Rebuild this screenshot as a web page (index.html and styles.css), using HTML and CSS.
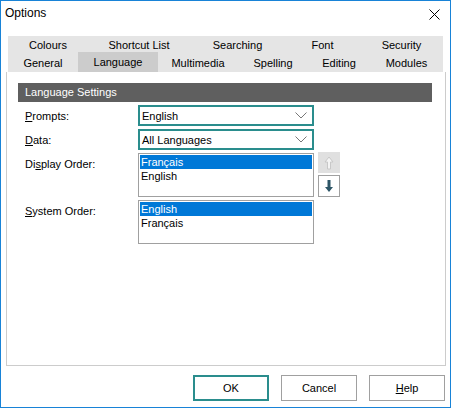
FILE: index.html
```html
<!DOCTYPE html>
<html lang="en">
<head>
  <meta charset="UTF-8">
  <title>Options</title>
  <link rel="stylesheet" href="styles.css">
</head>
<body>

<div class="window">
  <div class="titlebar">
    <span class="title">Options</span>
    <svg class="close" width="11" height="11" viewBox="0 0 11 11">
      <path d="M0.5 0.5 L10.5 10.5 M10.5 0.5 L0.5 10.5" stroke="#000" stroke-width="1" fill="none"/>
    </svg>
  </div>

  <div class="tabs">
    <div class="tab-row">
      <div class="tab" style="width:80px">Colours</div>
      <div class="tab" style="width:102px">Shortcut List</div>
      <div class="tab" style="width:95px">Searching</div>
      <div class="tab" style="width:75px">Font</div>
      <div class="tab" style="width:83px">Security</div>
    </div>
    <div class="tab-row">
      <div class="tab" style="width:70px">General</div>
      <div class="tab active" style="width:80px">Language</div>
      <div class="tab" style="width:80px">Multimedia</div>
      <div class="tab" style="width:70px">Spelling</div>
      <div class="tab" style="width:62px">Editing</div>
      <div class="tab" style="width:73px">Modules</div>
    </div>
  </div>

  <div class="panel">
    <div class="group-header">Language Settings</div>

    <div class="form">
      <label class="label"><u>P</u>rompts:</label>
      <div class="combo">
        <span>English</span>
        <svg width="12" height="7" viewBox="0 0 12 7"><path d="M0.5 0.5 L6 6 L11.5 0.5" stroke="#777" fill="none"/></svg>
      </div>

      <label class="label"><u>D</u>ata:</label>
      <div class="combo">
        <span>All Languages</span>
        <svg width="12" height="7" viewBox="0 0 12 7"><path d="M0.5 0.5 L6 6 L11.5 0.5" stroke="#777" fill="none"/></svg>
      </div>

      <label class="label label-top">Di<u>s</u>play Order:</label>
      <div class="list-wrap">
        <div class="listbox">
          <div class="item selected">Français</div>
          <div class="item">English</div>
        </div>
        <div class="move-btns">
          <div class="move-btn disabled">
            <svg width="10" height="14" viewBox="0 0 10 14"><path d="M5 1 L9 6 L6.5 6 L6.5 13 L3.5 13 L3.5 6 L1 6 Z" fill="#f4f4f4" stroke="#c8c8c8"/></svg>
          </div>
          <div class="move-btn">
            <svg width="10" height="14" viewBox="0 0 10 14"><path d="M3.5 1 L6.5 1 L6.5 8 L9 8 L5 13 L1 8 L3.5 8 Z" fill="#2d5566"/></svg>
          </div>
        </div>
      </div>

      <label class="label label-top"><u>S</u>ystem Order:</label>
      <div class="listbox">
        <div class="item selected">English</div>
        <div class="item">Français</div>
      </div>
    </div>
  </div>

  <div class="buttons">
    <button class="default">OK</button>
    <button>Cancel</button>
    <button><u>H</u>elp</button>
  </div>
</div>

</body>
</html>
```

FILE: styles.css
```css
body {
  margin: 0;
  font-family: "Liberation Sans", Arial, sans-serif;
  font-size: 11px;
  color: #000;
  background-color: #fff;
}
.window {
  box-sizing: border-box;
  width: 451px;
  height: 408px;
  border: 1px solid #1883d7;
  background-color: #fff;
  display: flex;
  flex-direction: column;
}
.titlebar {
  height: 35px;
  display: flex;
  justify-content: space-between;
  padding: 5px 10px 0 4px;
  box-sizing: border-box;
}
.title {
  font-size: 12px;
  line-height: 14px;
}
.close {
  margin-top: 3px;
}
.tabs {
  margin-left: 7px;
  width: 435px;
  background-color: #e5e5e5;
}
.tab-row {
  display: flex;
  height: 18px;
}
.tab {
  text-align: center;
  line-height: 18px;
  box-sizing: border-box;
}
.tab.active {
  background-color: #cccccc;
  margin-top: -2px;
  height: 20px;
  padding-top: 1px;
}
.panel {
  margin-left: 5px;
  width: 440px;
  height: 294px;
  box-sizing: border-box;
  border: 1px solid #cccccc;
  border-top: none;
  padding: 11px 13px 0 11px;
}
.group-header {
  background-color: #5f5f5f;
  color: #fff;
  height: 19px;
  line-height: 19px;
  padding-left: 7px;
}
.form {
  display: grid;
  grid-template-columns: 113px auto;
  row-gap: 3px;
  padding-left: 7px;
  margin-top: 3px;
}
.label {
  align-self: center;
}
.label-top {
  align-self: start;
  padding-top: 5px;
}
u {
  text-decoration: underline;
  text-underline-offset: 1px;
}
.combo {
  box-sizing: border-box;
  width: 176px;
  height: 21px;
  border: 2px solid #2a8d8d;
  display: flex;
  align-items: center;
  justify-content: space-between;
  padding: 0 5px 0 2px;
}
.list-wrap {
  display: flex;
  gap: 4px;
}
.listbox {
  box-sizing: border-box;
  width: 176px;
  height: 44px;
  border: 1px solid #a0a0a0;
  padding: 1px;
}
.item {
  height: 13px;
  line-height: 14px;
  padding-left: 1px;
}
.item.selected {
  height: 14px;
  background-color: #0078d7;
  color: #fff;
}
.move-btns {
  display: flex;
  flex-direction: column;
  gap: 2px;
  margin-top: -1px;
}
.move-btn {
  box-sizing: border-box;
  width: 22px;
  height: 22px;
  border: 1px solid #a0a0a0;
  background-color: #fff;
  display: flex;
  align-items: center;
  justify-content: center;
}
.move-btn.disabled {
  background-color: #e0e0e0;
  border-color: #e0e0e0;
  height: 21px;
}
.buttons {
  display: flex;
  justify-content: flex-end;
  gap: 12px;
  padding-right: 5px;
  margin-top: 9px;
}
button {
  box-sizing: border-box;
  width: 76px;
  height: 26px;
  border: 1px solid #a0a0a0;
  background-color: #fff;
  font-family: "Liberation Sans", Arial, sans-serif;
  font-size: 11px;
  color: #000;
  padding: 0;
}
button.default {
  border: 2px solid #2a8d8d;
}
```
